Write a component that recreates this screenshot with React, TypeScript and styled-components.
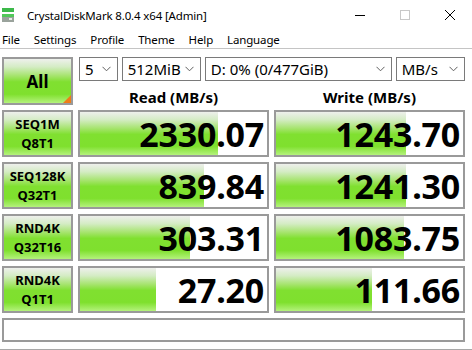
import { Fragment } from "react";
import styled, { createGlobalStyle } from "styled-components";

const GlobalStyle = createGlobalStyle`
    html, body {
        margin: 0;
        padding: 0;
        background: #fff;
    }
    body {
        font-family: "Noto Sans", "Open Sans", "Liberation Sans", sans-serif;
        color: #000;
    }
`

const GREEN_GRADIENT = 'linear-gradient(to bottom, #eef0ec 0%, #d4ecc4 18%, #a6e46e 38%, #80e030 52%, #7fe02e 80%, #b4f27c 100%)';

const results = [
    { line1: 'SEQ1M', line2: 'Q8T1', read: '2330.07', readBar: 138, write: '1243.70', writeBar: 130 },
    { line1: 'SEQ128K', line2: 'Q32T1', read: '839.84', readBar: 124, write: '1241.30', writeBar: 130 },
    { line1: 'RND4K', line2: 'Q32T16', read: '303.31', readBar: 110, write: '1083.75', writeBar: 128 },
    { line1: 'RND4K', line2: 'Q1T1', read: '27.20', readBar: 76, write: '111.66', writeBar: 96 },
]

const menuItems = ['File', 'Settings', 'Profile', 'Theme', 'Help', 'Language'];

const Window = styled.div`
    width: 472px;
    height: 350px;
    display: flex;
    flex-direction: column;
    background: #fff;
    overflow: hidden;
`

const TitleBar = styled.div`
    height: 30px;
    display: flex;
    align-items: center;
    padding-left: 2px;
    font-size: 11.5px;
    letter-spacing: -0.15px;
`

const TitleText = styled.span`
    margin-left: 13px;
    flex: 1;
`

const WinButton = styled.div`
    width: 45px;
    height: 30px;
    display: flex;
    align-items: center;
    justify-content: center;
`

const MenuBar = styled.div`
    height: 18px;
    display: flex;
    align-items: center;
    gap: 14px;
    padding-left: 2px;
    font-size: 11.5px;
    letter-spacing: -0.15px;
    border-bottom: 1px solid #c4c4c4;
`

const Panel = styled.div`
    display: grid;
    grid-template-columns: 71px 191px 191px;
    grid-template-rows: 24px 19px repeat(4, 47px) 24px;
    gap: 5px;
    padding: 8px 0 0 2px;
`

const AllButton = styled.div`
    grid-row: 1 / span 2;
    position: relative;
    box-sizing: border-box;
    border: 2px solid #9a9a9a;
    background: ${GREEN_GRADIENT};
    display: flex;
    align-items: center;
    justify-content: center;
    font-weight: 700;
    font-size: 17px;

    &::after {
        content: '';
        position: absolute;
        right: 0;
        bottom: 0;
        border-style: solid;
        border-width: 0 0 8px 8px;
        border-color: transparent transparent #f07c18 transparent;
    }
`

const Selects = styled.div`
    grid-column: 2 / span 2;
    display: flex;
    gap: 4px;
    margin-left: 1px;
`

const Select = styled.div<{ $width: number }>`
    width: ${p => p.$width}px;
    height: 24px;
    box-sizing: border-box;
    border: 1px solid #7a7a7a;
    display: flex;
    align-items: center;
    justify-content: space-between;
    padding: 0 6px 0 5px;
    font-size: 15px;
`

const Header = styled.div`
    display: flex;
    align-items: center;
    justify-content: center;
    font-weight: 700;
    font-size: 15px;
    line-height: 19px;
    margin-top: 3px;
`

const TestLabel = styled.div`
    box-sizing: border-box;
    border: 2px solid #9a9a9a;
    background: ${GREEN_GRADIENT};
    display: flex;
    flex-direction: column;
    align-items: center;
    justify-content: center;
    gap: 2px;
    font-weight: 700;
    font-size: 13px;
    line-height: 17px;
`

const ValueBox = styled.div`
    box-sizing: border-box;
    border: 2px solid #9a9a9a;
    background-color: #fff;
    background-image: ${GREEN_GRADIENT};
    background-repeat: no-repeat;
    display: flex;
    align-items: center;
    justify-content: flex-end;
    padding-right: 3px;
    font-weight: 700;
    font-size: 34px;
    line-height: 1;
    letter-spacing: -0.2px;
`

const Comment = styled.div`
    grid-column: 1 / span 3;
    box-sizing: border-box;
    border: 2px solid #9a9a9a;
`

const BottomLine = styled.div`
    margin-top: auto;
    height: 1px;
    background: #a8a8a8;
`

const AppIcon = () => (
    <svg width="12" height="15" viewBox="0 0 12 15">
        <rect x="0" y="0" width="12" height="4" fill="#3cb94a" />
        <rect x="0" y="6" width="12" height="3" fill="#52c85a" />
        <rect x="0" y="9" width="12" height="5" fill="#9aa39c" />
        <rect x="7" y="10" width="3" height="2" fill="#e8ece8" />
    </svg>
)

const Chevron = () => (
    <svg width="9" height="6" viewBox="0 0 9 6">
        <path d="M0.5 0.8 L4.5 4.8 L8.5 0.8" stroke="#606060" strokeWidth="1" fill="none" />
    </svg>
)

const App = () => {
    return <>
        <GlobalStyle />
        <Window>
            <TitleBar>
                <AppIcon />
                <TitleText>CrystalDiskMark 8.0.4 x64 [Admin]</TitleText>
                <WinButton>
                    <svg width="10" height="10" viewBox="0 0 10 10"><path d="M0 5.5 H10" stroke="#000" strokeWidth="1" /></svg>
                </WinButton>
                <WinButton>
                    <svg width="10" height="10" viewBox="0 0 10 10"><rect x="0.5" y="0.5" width="9" height="9" stroke="#c8c8c8" fill="none" /></svg>
                </WinButton>
                <WinButton>
                    <svg width="10" height="10" viewBox="0 0 10 10"><path d="M0 0 L10 10 M10 0 L0 10" stroke="#000" strokeWidth="1" /></svg>
                </WinButton>
            </TitleBar>
            <MenuBar>
                {menuItems.map(item => <span key={item}>{item}</span>)}
            </MenuBar>
            <Panel>
                <AllButton>All</AllButton>
                <Selects>
                    <Select $width={39}><span>5</span><Chevron /></Select>
                    <Select $width={80}><span>512MiB</span><Chevron /></Select>
                    <Select $width={189}><span>D: 0% (0/477GiB)</span><Chevron /></Select>
                    <Select $width={70}><span>MB/s</span><Chevron /></Select>
                </Selects>
                <Header>Read (MB/s)</Header>
                <Header>Write (MB/s)</Header>
                {results.map((r, i) => (
                    <Fragment key={i}>
                        <TestLabel>
                            <span>{r.line1}</span>
                            <span>{r.line2}</span>
                        </TestLabel>
                        {/* bar width is part of the result data */}
                        <ValueBox style={{ backgroundSize: `${r.readBar}px 100%` }}>{r.read}</ValueBox>
                        <ValueBox style={{ backgroundSize: `${r.writeBar}px 100%` }}>{r.write}</ValueBox>
                    </Fragment>
                ))}
                <Comment />
            </Panel>
            <BottomLine />
        </Window>
    </>
}

export default App;
